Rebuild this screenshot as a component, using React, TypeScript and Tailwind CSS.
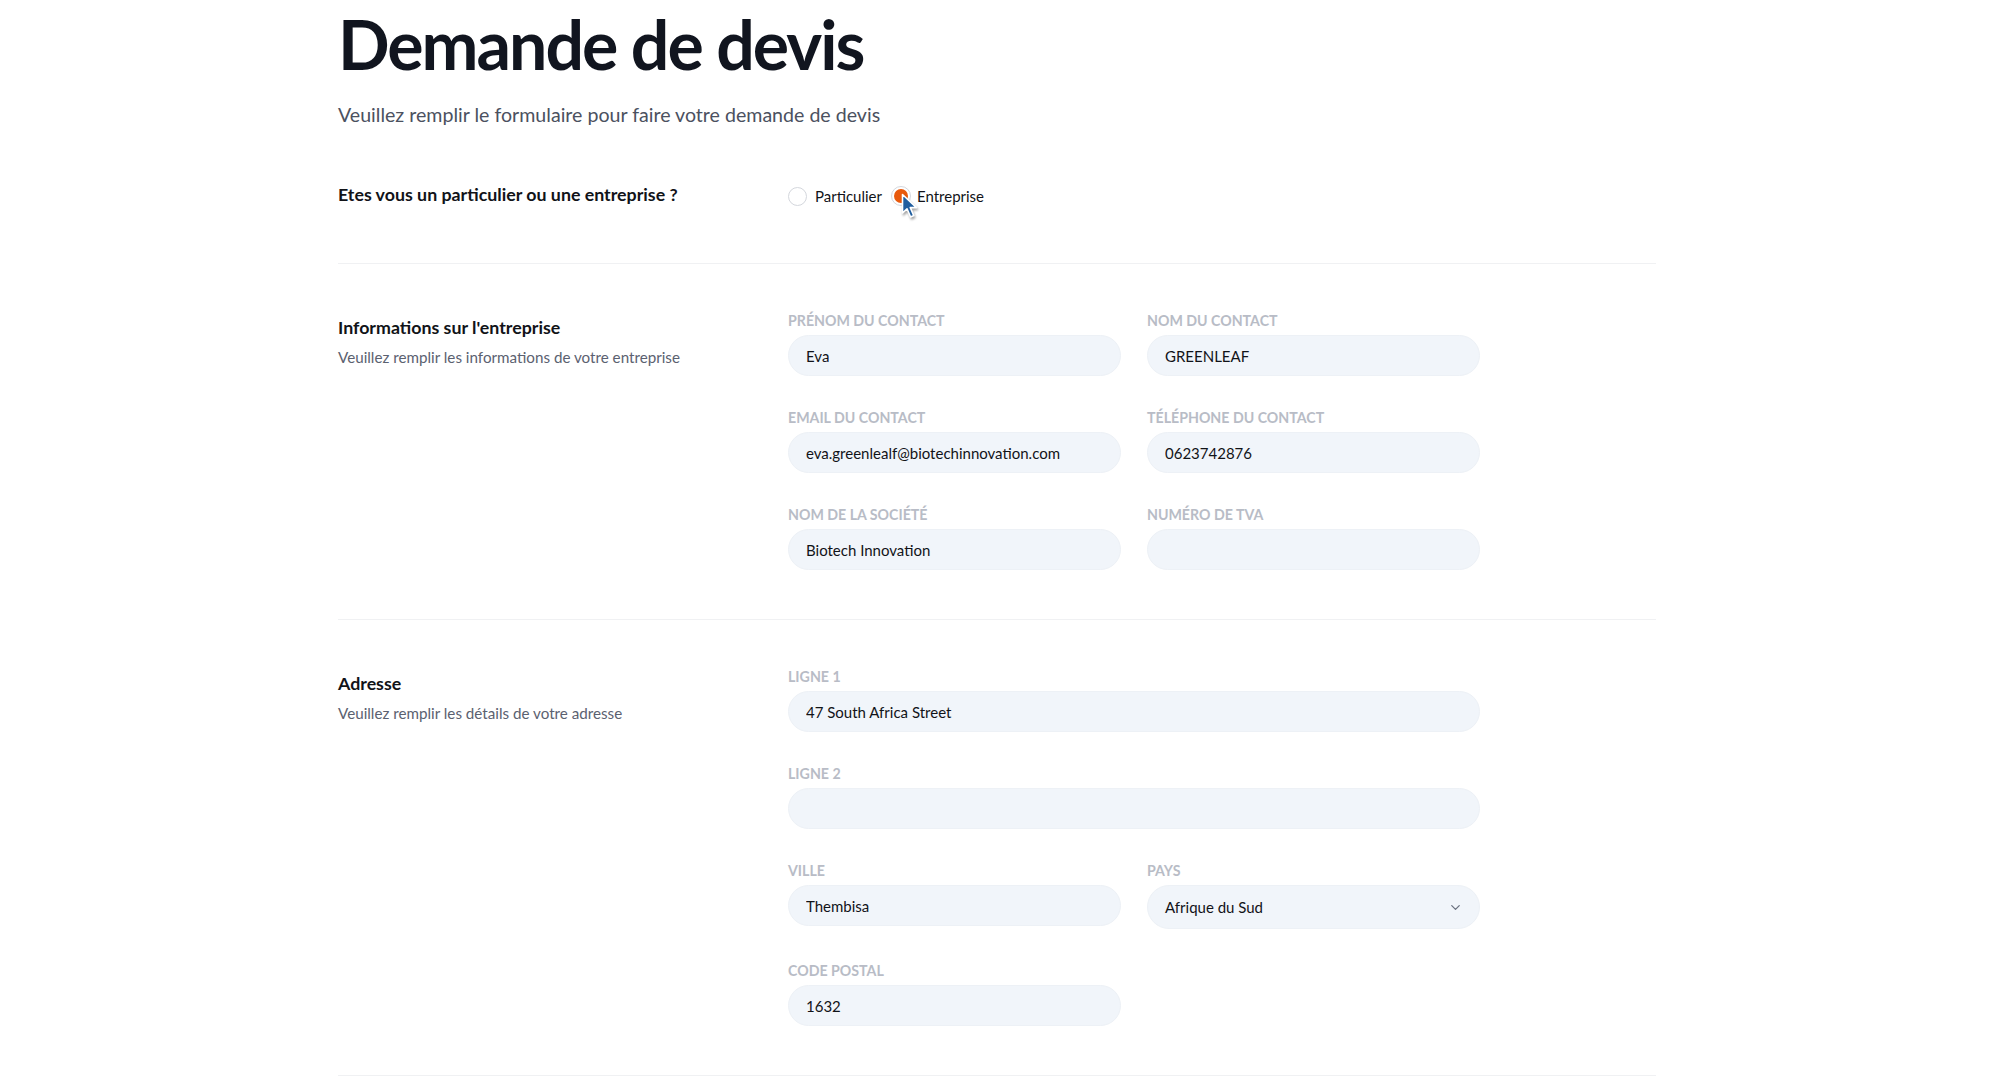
import { ChevronDown } from "lucide-react";

type Field = { label: string; value?: string; full?: boolean; select?: boolean };

const companyFields: Field[] = [
  { label: "Prénom du contact", value: "Eva" },
  { label: "Nom du contact", value: "GREENLEAF" },
  { label: "Email du contact", value: "eva.greenlealf@biotechinnovation.com" },
  { label: "Téléphone du contact", value: "0623742876" },
  { label: "Nom de la société", value: "Biotech Innovation" },
  { label: "Numéro de TVA", value: "" },
];

const addressFields: Field[] = [
  { label: "Ligne 1", value: "47 South Africa Street", full: true },
  { label: "Ligne 2", value: "", full: true },
  { label: "Ville", value: "Thembisa" },
  { label: "Pays", value: "Afrique du Sud", select: true },
  { label: "Code postal", value: "1632" },
];

function FieldBox({ field }: { field: Field }) {
  return (
    <div className={field.full ? "col-span-2" : ""}>
      <label className="block text-[14.2px] leading-[18px] font-bold uppercase text-[#b8bcc6] mb-[5px]">
        {field.label}
      </label>
      {field.select ? (
        <div className="h-[44px] rounded-full bg-[#f1f5fa] border border-[#edf1f6] flex items-center justify-between pl-[17px] pr-[16px] text-[15px] text-[#111318]">
          <span>{field.value}</span>
          <ChevronDown size={15} strokeWidth={2} className="text-[#6b7280]" />
        </div>
      ) : (
        <input
          readOnly
          value={field.value}
          className="w-full h-[41px] rounded-full bg-[#f1f5fa] border border-[#edf1f6] px-[17px] text-[15px] text-[#111318] outline-none"
        />
      )}
    </div>
  );
}

function Section({ title, desc, fields }: { title: string; desc: string; fields: Field[] }) {
  return (
    <div className="grid grid-cols-3 gap-x-[32px] pt-[48px] pb-[49px] border-b border-[#f0f1f3]">
      <div className="pt-[3px]">
        <h2 className="text-[17.8px] leading-[24px] font-bold text-[#111318]">{title}</h2>
        <p className="mt-[7px] text-[15.2px] leading-[22px] text-[#5b6170]">{desc}</p>
      </div>
      <div className="col-span-2">
        <div className="w-[692px] grid grid-cols-2 gap-x-[26px] gap-y-[33px]">
          {fields.map((f) => (
            <FieldBox key={f.label} field={f} />
          ))}
        </div>
      </div>
    </div>
  );
}

function Cursor() {
  return (
    <svg width="20" height="27" viewBox="0 0 20 27" className="absolute left-[901px] top-[193px] drop-shadow-[1px_2px_1px_rgba(0,0,0,0.35)]">
      <path
        d="M1.5 1.5 L1.5 20 L6 15.8 L9.6 24 L12.8 22.6 L9.3 14.6 L15.5 14.6 Z"
        fill="#1f5d9e"
        stroke="#ffffff"
        strokeWidth="1.6"
        strokeLinejoin="round"
      />
    </svg>
  );
}

export default function App() {
  return (
    <div className="min-h-screen bg-white font-['Lato',sans-serif] relative">
      <div className="ml-[338px] w-[1318px] pt-[10px]">
        <h1 className="text-[68px] leading-[68px] font-bold tracking-[-2px] text-[#11151f]">Demande de devis</h1>
        <p className="mt-[23px] text-[19.6px] leading-[28px] text-[#4b5160]">
          Veuillez remplir le formulaire pour faire votre demande de devis
        </p>

        {/* Type */}
        <div className="grid grid-cols-3 gap-x-[32px] pt-[55px] pb-[55px] border-b border-[#f0f1f3]">
          <p className="text-[17.8px] leading-[24px] font-bold text-[#111318] -mt-[2px]">
            Etes vous un particulier ou une entreprise ?
          </p>
          <div className="col-span-2 flex items-center h-[24px] text-[15px] text-[#111318]">
            <span className="w-[19px] h-[19px] rounded-full border border-[#d4d7dd] bg-white" />
            <span className="ml-[8px]">Particulier</span>
            <span className="ml-[9px] w-[20px] h-[20px] rounded-full border border-[#d4d7dd] bg-white flex items-center justify-center">
              <span className="w-[14px] h-[14px] rounded-full bg-[#e8590c]" />
            </span>
            <span className="ml-[6px]">Entreprise</span>
          </div>
        </div>

        <Section
          title="Informations sur l'entreprise"
          desc="Veuillez remplir les informations de votre entreprise"
          fields={companyFields}
        />
        <Section
          title="Adresse"
          desc="Veuillez remplir les détails de votre adresse"
          fields={addressFields}
        />
      </div>
      <Cursor />
    </div>
  );
}
